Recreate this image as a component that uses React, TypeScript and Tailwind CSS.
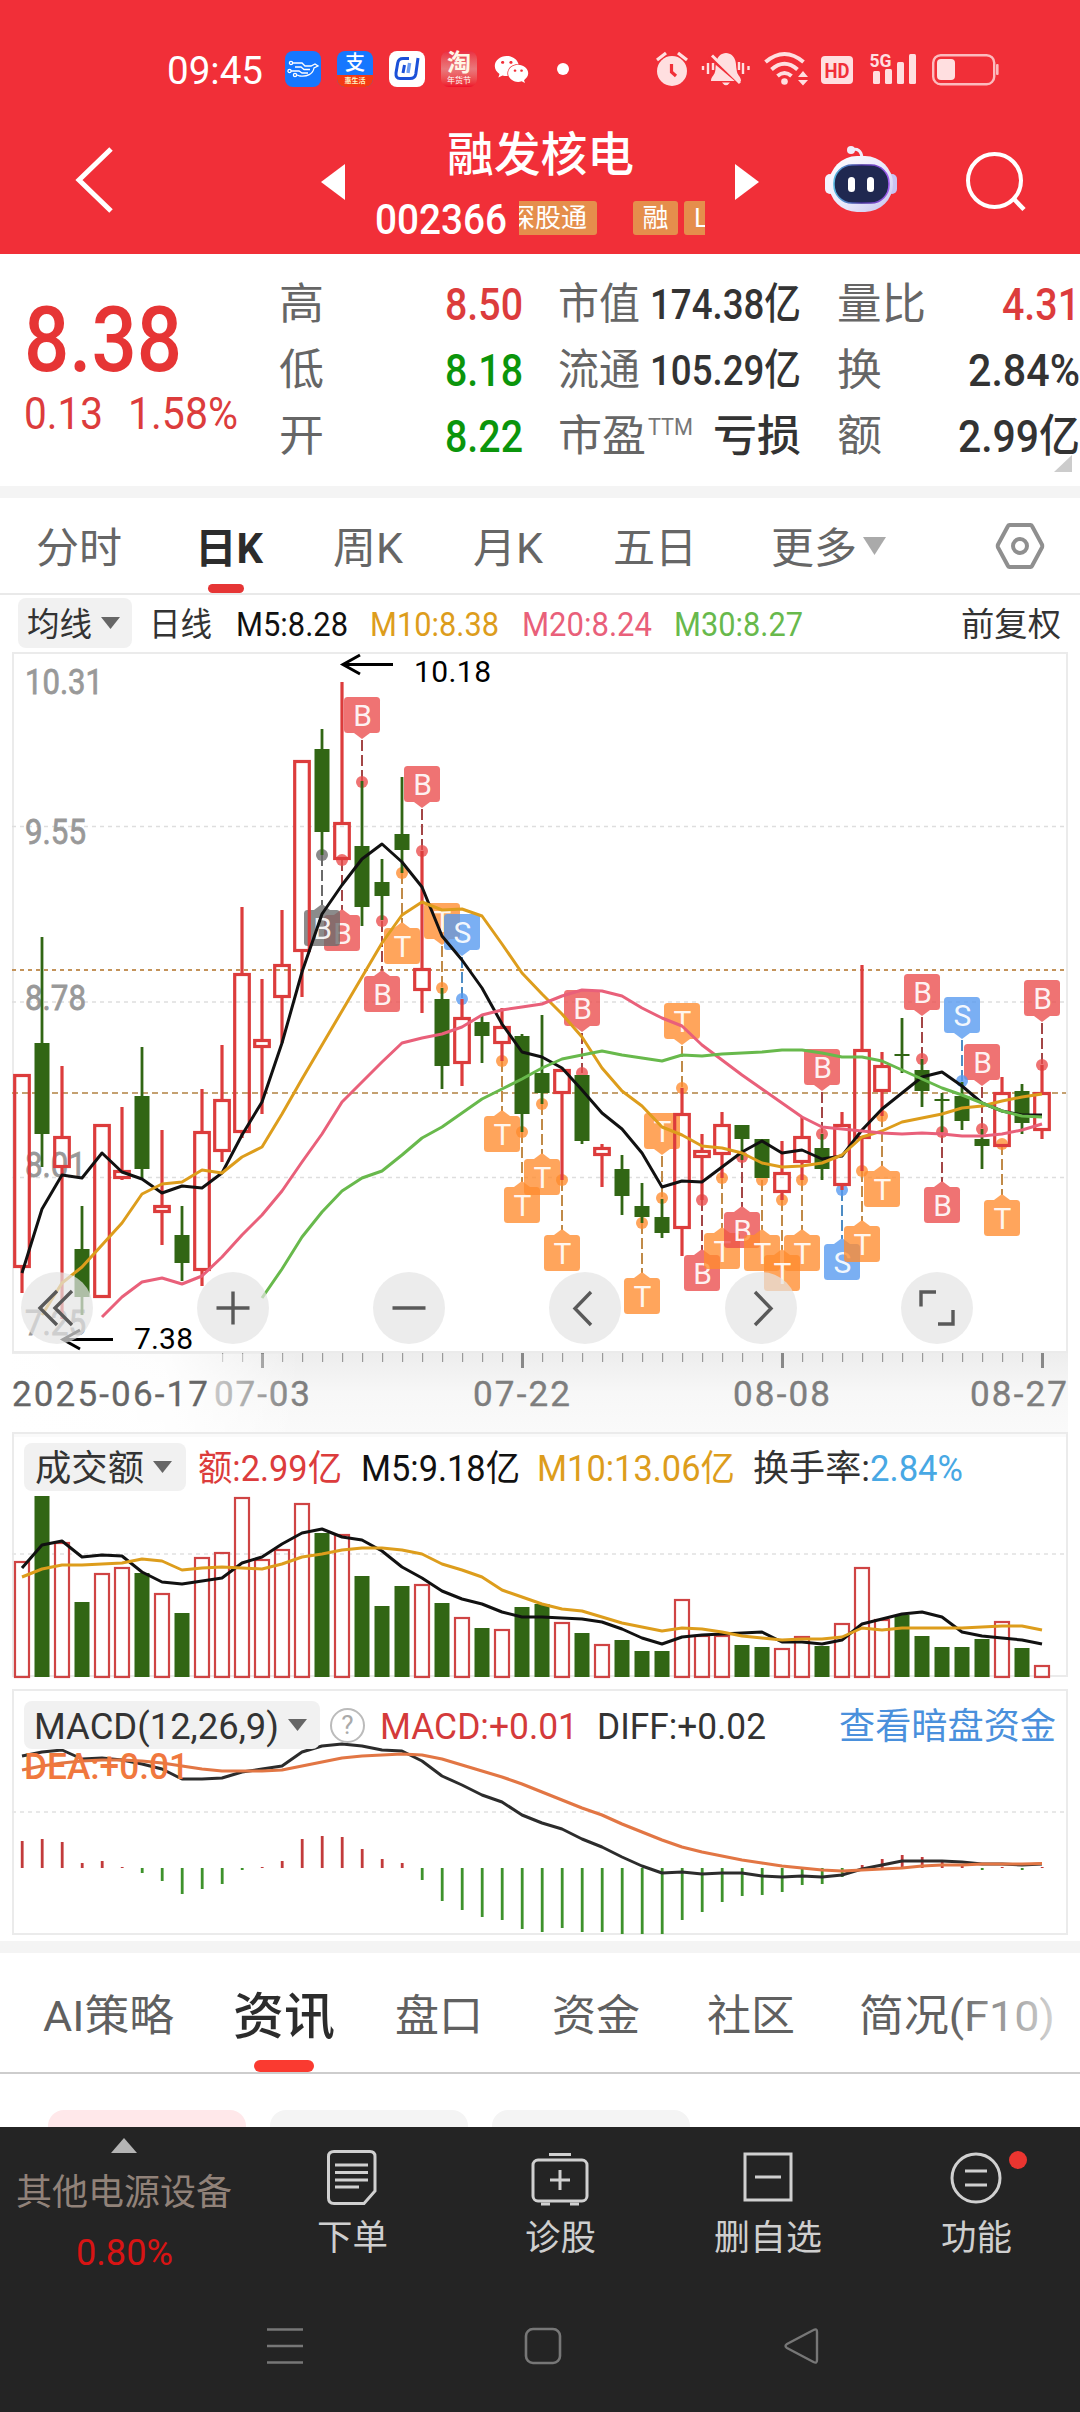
import { useLayoutEffect, useRef, useState } from "react";
import type { ReactNode } from "react";
import { FaWeixin } from "react-icons/fa";

/** Text squeezed or stretched horizontally so that it fills the width of its box. */
function Fit({ className, children }: { className: string; children: ReactNode }) {
  const outer = useRef<HTMLSpanElement>(null);
  const inner = useRef<HTMLSpanElement>(null);
  const [scale, setScale] = useState(1);
  useLayoutEffect(() => {
    if (outer.current && inner.current && inner.current.offsetWidth > 0) {
      setScale(outer.current.clientWidth / inner.current.getBoundingClientRect().width * scale);
    }
  }, []);
  return (
    <span ref={outer} className={"block shrink-0 translate-y-[1.5px] leading-none " + className}>
      <span ref={inner} className="inline-block origin-left whitespace-nowrap leading-none" style={{ transform: `scaleX(${scale})` }}>
        {children}
      </span>
    </span>
  );
}

const RED = "#dc3c3c";
const GREEN = "#316614";
const xOf = (i: number) => 22 + i * 20;

// [rising, bodyTop, bodyBottom, high, low]
const candles: [number, number, number, number, number][] = [
  [1, 1074, 1268, 1074, 1293], [0, 1043, 1134, 937, 1167], [1, 1136, 1168, 1066, 1319], [0, 1249, 1297, 1206, 1315],
  [1, 1124, 1298, 1124, 1298], [1, 1170, 1179, 1107, 1180], [0, 1096, 1169, 1047, 1178], [1, 1205, 1213, 1130, 1245],
  [0, 1235, 1263, 1206, 1281], [1, 1131, 1271, 1089, 1286], [1, 1099, 1152, 1045, 1162], [1, 973, 1133, 907, 1138],
  [1, 1039, 1048, 979, 1114], [1, 964, 998, 910, 1043], [1, 760, 952, 760, 997], [0, 749, 832, 729, 855],
  [1, 822, 860, 682, 860], [0, 846, 907, 781, 926], [0, 882, 896, 859, 920], [0, 834, 850, 777, 873],
  [1, 968, 991, 851, 1013], [0, 999, 1066, 988, 1089], [1, 1017, 1064, 999, 1086], [0, 1022, 1036, 1015, 1063],
  [1, 1026, 1044, 1008, 1061], [0, 1036, 1114, 1034, 1132], [0, 1073, 1093, 1015, 1104], [1, 1069, 1094, 1069, 1180],
  [0, 1075, 1141, 1075, 1144], [1, 1147, 1156, 1144, 1187], [0, 1169, 1196, 1155, 1215], [0, 1206, 1217, 1183, 1223],
  [0, 1217, 1233, 1199, 1238], [1, 1113, 1229, 1088, 1256], [1, 1150, 1158, 1134, 1200], [1, 1124, 1155, 1112, 1178],
  [0, 1125, 1139, 1125, 1160], [0, 1139, 1178, 1139, 1178], [1, 1172, 1193, 1141, 1200], [1, 1136, 1163, 1117, 1180],
  [0, 1148, 1169, 1134, 1180], [1, 1124, 1186, 1112, 1190], [1, 1049, 1139, 965, 1171], [1, 1065, 1092, 1052, 1116],
  [0, 1054, 1056, 1018, 1073], [0, 1070, 1091, 1059, 1107], [0, 1099, 1101, 1093, 1132], [0, 1096, 1121, 1082, 1130],
  [0, 1139, 1146, 1129, 1169], [1, 1092, 1147, 1077, 1147], [0, 1091, 1123, 1084, 1134], [1, 1092, 1131, 1065, 1139],
];

const ma5 = [1273, 1209, 1175, 1178, 1153, 1172, 1179, 1193, 1186, 1188, 1173, 1135, 1102, 1043, 972, 914, 885, 859, 844, 862, 887, 936, 960, 988, 1024, 1052, 1057, 1068, 1090, 1113, 1129, 1153, 1187, 1181, 1182, 1167, 1152, 1141, 1153, 1150, 1159, 1156, 1130, 1109, 1093, 1077, 1072, 1086, 1103, 1111, 1115, 1115];
const ma10 = [1315, 1283, 1267, 1245, 1223, 1194, 1184, 1182, 1170, 1173, 1157, 1147, 1114, 1079, 1045, 1011, 977, 943, 915, 902, 910, 909, 916, 944, 973, 994, 1014, 1037, 1068, 1091, 1106, 1127, 1135, 1146, 1148, 1153, 1163, 1167, 1166, 1163, 1155, 1137, 1131, 1122, 1118, 1114, 1108, 1106, 1101, 1097, 1094];
const ma20 = [1317, 1297, 1282, 1278, 1284, 1276, 1257, 1235, 1215, 1191, 1162, 1134, 1102, 1082, 1062, 1043, 1038, 1034, 1027, 1015, 1010, 1007, 1004, 996, 990, 991, 996, 1008, 1018, 1026, 1045, 1060, 1075, 1089, 1103, 1117, 1127, 1129, 1131, 1133, 1134, 1133, 1134, 1136, 1136, 1134, 1130, 1124];
const ma30 = [1298, 1269, 1237, 1212, 1191, 1178, 1171, 1155, 1138, 1127, 1113, 1099, 1089, 1079, 1068, 1059, 1055, 1051, 1055, 1058, 1061, 1055, 1056, 1054, 1053, 1052, 1050, 1050, 1053, 1057, 1057, 1061, 1070, 1079, 1088, 1095, 1103, 1111, 1116, 1117];

const volTop = [1561, 1496, 1542, 1602, 1573, 1567, 1573, 1593, 1613, 1557, 1552, 1497, 1559, 1549, 1503, 1533, 1534, 1576, 1606, 1586, 1584, 1603, 1617, 1628, 1629, 1607, 1604, 1622, 1633, 1644, 1640, 1651, 1651, 1599, 1635, 1635, 1645, 1647, 1648, 1636, 1646, 1623, 1567, 1619, 1615, 1636, 1647, 1647, 1639, 1621, 1648, 1665];
const vol5 = [1568, 1545, 1541, 1557, 1555, 1556, 1572, 1582, 1584, 1581, 1578, 1563, 1557, 1544, 1533, 1529, 1537, 1540, 1551, 1567, 1578, 1591, 1599, 1604, 1612, 1617, 1617, 1618, 1619, 1622, 1629, 1638, 1644, 1637, 1635, 1634, 1633, 1632, 1642, 1642, 1644, 1640, 1624, 1619, 1614, 1612, 1617, 1632, 1636, 1638, 1640, 1644];
const vol10 = [1577, 1569, 1565, 1565, 1564, 1563, 1559, 1561, 1570, 1568, 1567, 1568, 1569, 1564, 1557, 1554, 1550, 1548, 1548, 1550, 1554, 1564, 1570, 1577, 1590, 1597, 1604, 1609, 1611, 1617, 1623, 1627, 1631, 1628, 1629, 1632, 1636, 1638, 1640, 1639, 1639, 1637, 1628, 1630, 1628, 1628, 1628, 1628, 1627, 1626, 1626, 1630];

const diff = [1756, 1752, 1750, 1759, 1758, 1760, 1764, 1769, 1779, 1779, 1778, 1772, 1769, 1766, 1752, 1746, 1744, 1746, 1750, 1751, 1761, 1776, 1785, 1795, 1802, 1815, 1823, 1829, 1839, 1847, 1857, 1866, 1873, 1872, 1874, 1873, 1873, 1876, 1877, 1876, 1877, 1875, 1869, 1865, 1861, 1861, 1861, 1862, 1864, 1864, 1865, 1864];
const dea = [1770, 1766, 1763, 1761, 1760, 1760, 1761, 1763, 1766, 1769, 1771, 1771, 1771, 1770, 1766, 1762, 1758, 1756, 1755, 1754, 1755, 1759, 1765, 1771, 1777, 1784, 1792, 1800, 1808, 1815, 1824, 1832, 1840, 1847, 1852, 1856, 1860, 1863, 1866, 1868, 1870, 1871, 1870, 1869, 1868, 1866, 1865, 1865, 1864, 1864, 1864, 1863.5];
const macd = [1841, 1839, 1842, 1863, 1861, 1867, 1873, 1881, 1894, 1889, 1884, 1870, 1867, 1861, 1839, 1836, 1837, 1849, 1859, 1863, 1880, 1901, 1910, 1917, 1920, 1929, 1932, 1928, 1932, 1932, 1934, 1934, 1934, 1920, 1912, 1902, 1896, 1895, 1892, 1885, 1884, 1877, 1865, 1859, 1855, 1857, 1861, 1866, 1870, 1867, 1870, 1867];

// [index, letter, dotY, boxTop]; the box hangs above the dot when boxTop < dotY
const markers: [number, string, number, number][] = [
  [17, "B", 782, 697], [20, "B", 851, 766], [28, "B", 1073, 990], [33, "T", 1088, 1003], [40, "B", 1134, 1049],
  [45, "B", 1059, 974], [48, "B", 1129, 1044], [51, "B", 1065, 980], [47, "S", 1081, 997], [21, "T", 988, 903],
  [22, "S", 999, 914], [32, "T", 1198, 1113], [16, "B", 860, 915], [15, "G", 855, 910], [18, "B", 921, 976],
  [19, "T", 873, 928], [24, "T", 1061, 1116], [25, "T", 1132, 1187], [26, "T", 1104, 1159], [27, "T", 1180, 1235],
  [31, "T", 1223, 1278], [34, "B", 1200, 1255], [35, "T", 1178, 1233], [36, "B", 1157, 1212], [37, "T", 1180, 1235],
  [39, "T", 1180, 1235], [38, "T", 1200, 1255], [41, "S", 1190, 1244], [42, "T", 1171, 1226], [43, "T", 1116, 1171],
  [46, "B", 1132, 1187], [49, "T", 1144, 1200],
];
const markFill: Record<string, string> = { B: "#ea4b4b", T: "#ff8c2e", S: "#5598ef", G: "#6a6a6a" };
const markLine: Record<string, string> = { B: "#a34646", T: "#c08a48", S: "#4d8cc4", G: "#6a6a6a" };

const line = (ys: number[], start = 0) => ys.map((y, k) => `${xOf(k + start)},${y}`).join(" ");

function Curve({ ys, start, color, width = 3 }: { ys: number[]; start?: number; color: string; width?: number }) {
  return <polyline points={line(ys, start)} fill="none" stroke={color} strokeWidth={width} strokeLinejoin="round" />;
}

function Marker({ m }: { m: [number, string, number, number] }) {
  const [i, kind, dot, top] = m;
  const x = xOf(i);
  const above = top < dot;
  const b = top + 36;
  return (
    <g>
      <line x1={x} x2={x} y1={above ? b + 7 : dot} y2={above ? dot : top - 5} stroke={markLine[kind]} strokeWidth="2" strokeDasharray="11 4" />
      <circle cx={x} cy={dot} r="6" fill={markFill[kind]} fillOpacity="0.78" />
      <g fill={markFill[kind]} fillOpacity="0.78">
        <rect x={x - 18} y={top} width="36" height="36" rx="3.5" />
        <path d={above ? `M${x - 8} ${b}h16l-8 6z` : `M${x - 8} ${top}h16l-8 -6z`} />
      </g>
      <text x={x + 0.5} y={top + 29} textAnchor="middle" fontSize="30" fill="#fff" fillOpacity="0.93">
        {kind === "G" ? "B" : kind}
      </text>
    </g>
  );
}

function PriceChart() {
  const ticks = Array.from({ length: 42 }, (_, k) => k + 10);
  const prices: [string, number, number][] = [["10.31", 694, 78], ["9.55", 844, 61], ["8.78", 1010, 61], ["8.01", 1177, 61], ["7.25", 1335, 61]];
  return (
    <svg className="block h-[782px] w-[1080px] font-[Roboto]" viewBox="0 650 1080 782">
      <defs>
        <linearGradient id="axisV" x1="0" x2="0" y1="0" y2="1">
          <stop offset="0" stopColor="#ededed" />
          <stop offset="0.5" stopColor="#f7f7f7" />
          <stop offset="1" stopColor="#fafafa" />
        </linearGradient>
        <linearGradient id="axisFade" x1="0" x2="1" y1="0" y2="0">
          <stop offset="0" stopColor="#fff" />
          <stop offset="0.55" stopColor="#fff" stopOpacity="0.9" />
          <stop offset="1" stopColor="#fff" stopOpacity="0" />
        </linearGradient>
      </defs>
      <rect x="12" y="1353" width="1056" height="79" fill="url(#axisV)" />
      <rect x="13" y="653" width="1054" height="699" fill="#fff" stroke="#ebebeb" strokeWidth="2" />
      <g stroke="#dedede" strokeWidth="1.3" strokeDasharray="4 4">
        <path d="M12 826.5H1066M12 1002H1066M12 1177.5H1066" />
      </g>
      <path d="M12 970H1066" stroke="#c4935a" strokeWidth="2" strokeDasharray="4 4" />
      <path d="M12 1093H1066" stroke="#c4a070" strokeWidth="1.8" strokeDasharray="6 4" />

      {ticks.map((i) =>
        (i - 12) % 13 === 0 ? (
          <rect key={i} x={xOf(i) - 1} y="1353" width="3" height="15" fill="#888" />
        ) : (
          <rect key={i} x={xOf(i)} y="1353" width="1.2" height="9" fill="#999" />
        ),
      )}
      <g fontSize="35" fill="#7e7e7e" stroke="#7e7e7e" strokeWidth="0.4">
        <text x="214" y="1406" textLength="96">07-03</text>
        <text x="473" y="1406" textLength="97">07-22</text>
        <text x="733" y="1406" textLength="97">08-08</text>
        <text x="970" y="1406" textLength="97">08-27</text>
      </g>
      <rect x="0" y="1354" width="300" height="78" fill="url(#axisFade)" />
      <text x="12" y="1406" fontSize="35" fill="#666" stroke="#666" strokeWidth="0.3" textLength="196">2025-06-17</text>

      <g fill="#999" stroke="#999" strokeWidth="0.8" fontSize="35">
        {prices.map(([t, y, w]) => (
          <text key={t} x="25" y={y} textLength={w} lengthAdjust="spacingAndGlyphs">{t}</text>
        ))}
      </g>

      {markers.map((m) => <Marker key={m[0]} m={m} />)}

      {candles.map(([up, t, b, h, l], i) => {
        const x = xOf(i);
        return up ? (
          <g key={i} stroke={RED} strokeWidth="3.2" fill="none">
            {h < t && <path d={`M${x} ${h}V${t}`} />}
            {l > b && <path d={`M${x} ${b}V${l}`} />}
            <rect x={x - 7.3} y={t + 1.5} width="14.6" height={Math.max(b - t - 3, 2)} />
          </g>
        ) : (
          <g key={i} fill={GREEN}>
            <rect x={x - 1.4} y={h} width="2.8" height={l - h} />
            <rect x={x - 7.5} y={t} width="15" height={b - t} />
          </g>
        );
      })}

      <Curve ys={ma5} color="#111" />
      <Curve ys={ma10} start={1} color="#dd9d1c" />
      <Curve ys={ma20} start={4} color="#e9607a" />
      <Curve ys={ma30} start={12} color="#68b94c" />

      <g stroke="#000" strokeWidth="3" fill="none">
        <path d="M393 664.5H343M360 655L343 664.5L360 674" />
        <path d="M113 1339.5H63M80 1330L63 1339.5L80 1349" />
      </g>
      <g fontSize="30">
        <text x="414" y="682" textLength="77">10.18</text>
        <text x="134" y="1349" textLength="59">7.38</text>
      </g>
    </svg>
  );
}

function Control({ d }: { d: string }) {
  return (
    <button className="flex size-[72px] items-center justify-center rounded-full bg-[#e4e4e4]/70">
      <svg className="size-[72px]" viewBox="0 0 72 72" fill="none" stroke="#595959" strokeWidth="3.4"><path d={d} /></svg>
    </button>
  );
}

function VolumeChart() {
  return (
    <svg className="block h-[256px] w-[1080px]" viewBox="0 1432 1080 256">
      <path d="M12 1432H1068V1437H12z" fill="#fafafa" />
      <rect x="13" y="1433" width="1054" height="243" fill="none" stroke="#ebebeb" strokeWidth="2" />
      <path d="M12 1554H1066" stroke="#e8e8e8" strokeWidth="2" strokeDasharray="4 4" />
      {volTop.map((t, i) =>
        candles[i][0] ? (
          <rect key={i} x={xOf(i) - 7} y={t + 1} width="14" height={1676 - t} fill="none" stroke="#cf4444" strokeWidth="2.2" />
        ) : (
          <rect key={i} x={xOf(i) - 7.5} y={t} width="15" height={1677 - t} fill={GREEN} />
        ),
      )}
      <Curve ys={vol5} color="#111" />
      <Curve ys={vol10} color="#dd9d1c" />
    </svg>
  );
}

function MacdChart() {
  return (
    <svg className="block h-[253px] w-[1080px]" viewBox="0 1688 1080 253">
      <rect x="13" y="1690" width="1054" height="244" fill="none" stroke="#ebebeb" strokeWidth="2" />
      <path d="M12 1812H1066" stroke="#e8e8e8" strokeWidth="2" strokeDasharray="4 4" />
      {macd.map((y, i) => (
        <rect key={i} x={xOf(i) - 1.2} y={Math.min(y, 1868)} width="2.8" height={Math.abs(y - 1868)} fill={y < 1868 ? "#c23b3b" : "#3e922c"} />
      ))}
      <Curve ys={diff} color="#2c2c2c" width={3} />
      <Curve ys={dea} color="#e27644" width={3.2} />
    </svg>
  );
}

function Down({ className }: { className: string }) {
  return <svg className={"shrink-0 " + className} viewBox="0 0 20 13" preserveAspectRatio="none"><path d="M0 0H20L10 13z" fill="currentColor" /></svg>;
}

function StatusBar() {
  return (
    <div className="flex h-[54px] items-center pl-[167px]">
      <Fit className="w-[96px] text-[38px]">09:45</Fit>
      <svg className="ml-[22px] size-9" viewBox="0 0 36 36">
        <rect width="36" height="36" rx="8" fill="#1677ff" />
        <g fill="none" stroke="#fff" strokeWidth="1.3">
          <circle cx="6" cy="12" r="1.6" /><circle cx="4.5" cy="20" r="1.6" /><circle cx="10" cy="24" r="1.6" />
          <path d="M8 12H17L20 15H26L30 13L33 15L29 17C28 23 22 26 15 25L12 24M6 20H14L17 22H23M10 16H16L19 18.5H25" />
        </g>
      </svg>
      <div className="ml-4 flex size-9 flex-col rounded-lg bg-[#1677ff] text-center">
        <span className="block h-6 text-[20px] font-medium leading-[24px]">支</span>
        <span className="block h-3 rounded-b-lg bg-[#f43a14] text-[7px] font-bold leading-[12px] text-[#fff0c0]">惠生活</span>
      </div>
      <svg className="ml-4 size-9" viewBox="0 0 36 36">
        <rect width="36" height="36" rx="8" fill="#fff" />
        <path d="M20 7.5H14Q9.500 7.500 8.700 12L7 22Q6.500 27.500 11 27.500H21Q26 27.500 26.800 23L29 7M14 22L15.500 14" fill="none" stroke="#1b50d8" strokeWidth="3" />
        <path d="M19 22L20.600 12" stroke="#6b9bf2" strokeWidth="3.4" />
      </svg>
      <div className="ml-4 flex size-9 flex-col items-center rounded-lg bg-gradient-to-b from-[#ea2c42] via-[#e9787c] to-[#ee0a2a]">
        <span className="text-[24px] font-bold leading-[25px] text-[#fff6e6]">淘</span>
        <span className="text-[8px] leading-[10px]">年货节</span>
      </div>
      <FaWeixin className="ml-[17px] size-[35px]" />
      <span className="ml-[28px] size-3 rounded-full bg-white" />

      <svg className="ml-[87px] h-[36px] w-[345px] overflow-visible text-[#ffdfe0]" viewBox="657 51 345 36" fill="currentColor">
        <circle cx="673" cy="71" r="15" />
        <path d="M658 60L667 53M688 60L679 53" stroke="currentColor" strokeWidth="3.2" />
        <path d="M672.500 64V72L677 76" fill="none" stroke="#f12f38" strokeWidth="3.2" />
        <path d="M727 53C717 54 717 63 716.500 69C716 76 712 76 712 81H742C742 76 738 76 737.500 69C737 63 737 54 727 53zM723 82.500H731Q727 88 723 82.500z" />
        <path d="M710 57L744 86" stroke="#f12f38" strokeWidth="3" />
        <path d="M713 55.500L741 83" stroke="currentColor" strokeWidth="3" />
        <path d="M704 66V70M709 63V74M714 63V70M740 62V70M744 63V74M749.500 66V70" stroke="currentColor" strokeWidth="2.4" />
        <g fill="none" stroke="currentColor" strokeWidth="4">
          <path d="M766.500 62Q785.500 46 804.500 62M772.500 69.500Q785.500 58 798.500 69.500M778.500 76Q785.500 70 792.500 76" />
        </g>
        <circle cx="785.500" cy="81.500" r="3.300" />
        <path d="M799 77H809L804 71zM799 80H809L804 85.500z" />
        <rect x="822" y="56" width="32" height="28" rx="4" />
        <text x="838" y="77.500" textAnchor="middle" fontSize="21" fontWeight="700" fill="#f12f38" textLength="25" lengthAdjust="spacingAndGlyphs" className="font-[Roboto]">HD</text>
        <text x="870.500" y="66.500" fontSize="19" fontWeight="700" textLength="22" lengthAdjust="spacingAndGlyphs" className="font-[Roboto]">5G</text>
        <rect x="874" y="71" width="7" height="13" rx="1.500" /><rect x="886" y="69" width="7" height="15" rx="1.500" />
        <rect x="898" y="62" width="7" height="22" rx="1.500" /><rect x="910" y="54" width="7" height="30" rx="1.500" />
        <rect x="934.200" y="55.200" width="61" height="29" rx="7.500" fill="none" stroke="currentColor" strokeWidth="2.400" opacity="0.8" />
        <rect x="938" y="59" width="18" height="21" rx="4" />
        <rect x="997" y="64" width="2.600" height="11" rx="1" opacity="0.8" />
      </svg>
    </div>
  );
}

function TitleBar() {
  return (
    <div className="flex h-[138px] items-center">
      <svg className="-mt-[10px] ml-[74px] h-[66px] w-[42px]" viewBox="0 0 42 66" fill="none" stroke="#fff" strokeWidth="5"><path d="M37 2L5 33L37 64" /></svg>
      <svg className="-mt-[6px] ml-[205px] h-[36px] w-[24px]" viewBox="0 0 24 36" fill="#fff"><path d="M24 0V36L0 18z" /></svg>
      <div className="ml-[30px] flex h-[138px] w-[330px] flex-col items-center">
        <Fit className="mt-[13px] w-[187px] text-[47px] font-medium">融发核电</Fit>
        <div className="mt-[21px] flex w-[330px] items-center">
          <Fit className="w-[132px] text-[42px] font-medium">002366</Fit>
          <div className="ml-3 flex h-[34px] w-[186px] overflow-hidden text-[26px] leading-[34px]">
            <div className="-ml-[10px] flex shrink-0">
              <span className="rounded-[3px] bg-[#e58e4c] pr-[10px]">深股通</span>
              <span className="ml-9 w-[45px] rounded-[3px] bg-[#e58e4c] text-center">融</span>
              <span className="ml-[6px] w-[45px] rounded-[3px] bg-[#e58e4c] pl-[10px]">L</span>
            </div>
          </div>
        </div>
      </div>
      <svg className="-mt-[6px] ml-[30px] h-[36px] w-[24px]" viewBox="0 0 24 36" fill="#fff"><path d="M0 0V36L24 18z" /></svg>
      <svg className="-mt-[12px] ml-[65px] h-[68px] w-[74px]" viewBox="824 145 74 68">
        <defs>
          <linearGradient id="head" x1="0" x2="1" y1="0" y2="1"><stop offset="0" stopColor="#fff" /><stop offset="0.6" stopColor="#e6e6fa" /><stop offset="1" stopColor="#c3c0ee" /></linearGradient>
          <linearGradient id="visor" x1="0" x2="1"><stop offset="0" stopColor="#58b8e0" /><stop offset="0.5" stopColor="#44309a" /><stop offset="1" stopColor="#a05cf0" /></linearGradient>
        </defs>
        <path d="M851 150Q861 147 862 158" fill="none" stroke="#f1ecfa" strokeWidth="3" />
        <circle cx="851" cy="150" r="4" fill="#f1ecfa" />
        <rect x="825" y="174" width="10" height="20" rx="5" fill="#f4f2ff" />
        <rect x="887" y="174" width="10" height="20" rx="5" fill="#c9c4f2" />
        <rect x="829" y="156" width="64" height="56" rx="28" fill="url(#head)" />
        <rect x="834" y="165" width="55" height="38" rx="18" fill="#1f2850" stroke="url(#visor)" strokeWidth="1.600" />
        <rect x="848" y="177" width="7" height="15" rx="3.500" fill="#fff" /><rect x="867" y="177" width="7" height="15" rx="3.500" fill="#fff" />
      </svg>
      <svg className="-mt-[6px] ml-[67px] size-[62px]" viewBox="0 0 62 62" fill="none" stroke="#fff" strokeWidth="4"><circle cx="29.500" cy="29.500" r="26.500" /><path d="M48 47L59 58.500" strokeWidth="4.500" /></svg>
    </div>
  );
}

function Quote() {
  return (
    <section className="relative flex h-[232px] text-[#333]">
      <div className="w-[279px] pl-[24px] text-[#e63535]">
        <Fit className="mt-[40px] w-[158px] text-[90px] font-medium">8.38</Fit>
        <div className="mt-[5px] flex">
          <Fit className="w-[79px] text-[45px] text-[#dc3c3c]">0.13</Fit>
          <Fit className="ml-[25px] w-[110px] text-[45px] text-[#dc3c3c]">1.58%</Fit>
        </div>
      </div>
      <div className="mt-[16px] grid h-[197px] w-[244px] grid-cols-[1fr_78px] grid-rows-3 items-center text-[43px]">
        <Fit className="w-[45px] text-[#666]">高</Fit><Fit className="w-[78px] text-[45px] font-medium text-[#dc3c3c]">8.50</Fit>
        <Fit className="w-[45px] text-[#666]">低</Fit><Fit className="w-[78px] text-[45px] font-medium text-[#0b950b]">8.18</Fit>
        <Fit className="w-[45px] text-[#666]">开</Fit><Fit className="w-[78px] text-[45px] font-medium text-[#0b950b]">8.22</Fit>
      </div>
      <div className="ml-[35px] mt-[16px] grid h-[197px] w-[243px] grid-rows-3 items-center text-[43px]">
        <div className="flex items-center justify-between"><Fit className="w-[82px] text-[#666]">市值</Fit><Fit className="w-[151px] font-medium">174.38亿</Fit></div>
        <div className="flex items-center justify-between"><Fit className="w-[82px] text-[#666]">流通</Fit><Fit className="w-[151px] font-medium">105.29亿</Fit></div>
        <div className="flex items-center">
          <Fit className="w-[88px] text-[#666]">市盈</Fit>
          <Fit className="mb-[18px] ml-[2px] w-[45px] text-[23px] text-[#777]">TTM</Fit>
          <Fit className="ml-auto w-[88px] font-medium">亏损</Fit>
        </div>
      </div>
      <div className="ml-[36px] mt-[16px] grid h-[197px] w-[243px] grid-rows-3 items-center text-[43px]">
        <div className="flex items-center justify-between"><Fit className="w-[89px] text-[#666]">量比</Fit><Fit className="w-[78px] text-[45px] font-medium text-[#dc3c3c]">4.31</Fit></div>
        <div className="flex items-center justify-between"><Fit className="w-[45px] text-[#666]">换</Fit><Fit className="w-[112px] text-[45px] font-medium">2.84%</Fit></div>
        <div className="flex items-center justify-between"><Fit className="w-[45px] text-[#666]">额</Fit><Fit className="w-[122px] text-[45px] font-medium">2.99亿</Fit></div>
      </div>
      <svg className="absolute bottom-[14px] right-2 h-[17px] w-[18px]" viewBox="0 0 18 17"><path d="M18 0V17H0z" fill="#ccc" /></svg>
    </section>
  );
}

function PeriodTabs() {
  return (
    <nav className="flex h-[97px] items-center border-b-2 border-[#e9e9e9] text-[42px] text-[#666]">
      <Fit className="ml-[36px] mt-[2px] w-[86px]">分时</Fit>
      <div className="relative ml-[73px] flex h-[95px] items-center text-[#2c2c2c]">
        <Fit className="mt-[2px] w-[68px] font-bold">日K</Fit>
        <span className="absolute bottom-0 left-[13px] h-[9px] w-[36px] rounded-full bg-[#e63535]" />
      </div>
      <Fit className="ml-[70px] mt-[2px] w-[70px]">周K</Fit>
      <Fit className="ml-[70px] mt-[2px] w-[70px]">月K</Fit>
      <Fit className="ml-[70px] mt-[2px] w-[84px]">五日</Fit>
      <Fit className="ml-[74px] mt-[2px] w-[86px]">更多</Fit>
      <Down className="ml-[6px] h-[18px] w-[23px] text-[#aaa]" />
      <svg className="ml-[109px] h-[48px] w-[50px]" viewBox="0 0 50 48" fill="none" stroke="#8f8f8f" strokeWidth="4"><path d="M14.500 3H35.500Q36.500 3 37 4L47 22.500Q47.500 24 47 25.500L37 44Q36.500 45 35.500 45H14.500Q13.500 45 13 44L3 25.500Q2.500 24 3 22.500L13 4Q13.500 3 14.500 3z" /><circle cx="25" cy="24" r="7" /></svg>
    </nav>
  );
}

function AverageRow() {
  return (
    <div className="flex h-[55px] items-center text-[33px] text-[#333]">
      <div className="ml-[18px] flex h-[50px] w-[114px] items-center rounded-lg bg-[#f1f1f1] pl-[9px]">
        <Fit className="w-[65px]">均线</Fit>
        <Down className="ml-[9px] h-[12px] w-[19px] text-[#666]" />
      </div>
      <Fit className="ml-[17px] w-[63px]">日线</Fit>
      <Fit className="ml-[24px] w-[112px] text-[#111]">M5:8.28</Fit>
      <Fit className="ml-[22px] w-[129px] text-[#dd9d1c]">M10:8.38</Fit>
      <Fit className="ml-[23px] w-[130px] text-[#e9607a]">M20:8.24</Fit>
      <Fit className="ml-[22px] w-[129px] text-[#68b94c]">M30:8.27</Fit>
      <Fit className="ml-[158px] w-[100px]">前复权</Fit>
    </div>
  );
}

function DetailTabs() {
  return (
    <>
      <nav className="relative flex h-[121px] items-center border-b-2 border-[#cdcdcd] text-[43px] text-[#606060]">
        <Fit className="ml-[43px] mt-[3px] w-[131px]">AI策略</Fit>
        <div className="relative ml-[59px] flex h-[119px] items-center text-[#2c2c2c]">
          <Fit className="mt-[4px] w-[102px] text-[50px] font-medium">资讯</Fit>
          <span className="absolute bottom-0 left-[21px] h-[12px] w-[60px] rounded-full bg-[#fa3a30]" />
        </div>
        <Fit className="ml-[60px] mt-[3px] w-[88px]">盘口</Fit>
        <Fit className="ml-[69px] mt-[3px] w-[88px]">资金</Fit>
        <Fit className="ml-[67px] mt-[3px] w-[88px]">社区</Fit>
        <Fit className="ml-[64px] mt-[3px] w-[196px]">简况(F10)</Fit>
        <span className="absolute right-0 top-0 h-[119px] w-[130px] bg-gradient-to-r from-white/0 to-white/90" />
      </nav>
      <div className="flex h-[53px] gap-6 overflow-hidden pl-12 pt-[36px]">
        <span className="h-[72px] w-[198px] rounded-2xl bg-[#ffe8ea]" />
        <span className="h-[72px] w-[198px] rounded-2xl bg-[#f4f4f4]" />
        <span className="h-[72px] w-[198px] rounded-2xl bg-[#f4f4f4]" />
      </div>
    </>
  );
}

function Action({ box, label, width, children }: { box: string; label: string; width: string; children: ReactNode }) {
  return (
    <div className={"flex flex-col items-center pt-[20px] " + box}>
      <svg className="h-[60px] w-[60px]" viewBox="0 0 60 60" fill="none" stroke="#d0d0d0" strokeWidth="3">{children}</svg>
      <Fit className={"mt-[12px] text-[35px] text-[#cfcfcf] " + width}>{label}</Fit>
    </div>
  );
}

function BottomBar() {
  return (
    <footer className="h-[285px] bg-[#242424]">
      <div className="flex h-[170px]">
        <div className="flex w-[248px] flex-col items-center pt-[11px]">
          <svg className="h-[15px] w-[26px]" viewBox="0 0 26 15"><path d="M13 0L26 15H0z" fill="#b4b4b4" /></svg>
          <Fit className="mt-[20px] w-[216px] text-[36px] text-[#918279]">其他电源设备</Fit>
          <Fit className="mt-[23px] w-[97px] text-[37px] text-[#d81414]">0.80%</Fit>
        </div>
        <Action box="w-[208px]" label="下单" width="w-[71px]">
          <path d="M12 4.500H48Q53 4.500 53 9.500V44L42 56.500H12Q6.500 56.500 6.500 51V9.500Q6.500 4.500 12 4.500z" />
          <path d="M13 18H46M13 25.500H46M13 33H46M13 40H37" />
        </Action>
        <Action box="w-[208px]" label="诊股" width="w-[71px]">
          <rect x="3" y="13" width="54" height="41" rx="5" />
          <path d="M19 7.500H41M30 23V43M20 33H40M11 57H20M40 57H49" />
        </Action>
        <Action box="w-[208px]" label="删自选" width="w-[108px]">
          <rect x="7" y="7" width="46" height="46" />
          <path d="M17 30H43" />
        </Action>
        <div className="relative">
          <Action box="w-[208px]" label="功能" width="w-[71px]">
            <circle cx="30" cy="31" r="24" />
            <path d="M19 24H41M19 38H41" />
          </Action>
          <span className="absolute left-[137px] top-[24px] size-[18px] rounded-full bg-[#ea3530]" />
        </div>
      </div>
      <div className="flex items-center pl-[266px] pt-[30px]">
        <svg className="h-[38px] w-[38px]" viewBox="0 0 38 38" stroke="#777" strokeWidth="2.600"><path d="M1 2.500H37M1 19H37M1 35.500H37" /></svg>
        <svg className="ml-[220px] size-[38px]" viewBox="0 0 38 38" fill="none" stroke="#777" strokeWidth="2.600"><rect x="2" y="2" width="34" height="34" rx="7" /></svg>
        <svg className="ml-[220px] size-[38px]" viewBox="0 0 38 38" fill="none" stroke="#777" strokeWidth="2.400"><path d="M35 5V33Q35 37 31.500 35L5 21Q2 19 5 17L31.500 3Q35 1 35 5z" /></svg>
      </div>
    </footer>
  );
}

export default function App() {
  return (
    <main className="flex h-[2412px] w-[1080px] flex-col overflow-hidden bg-white font-[Roboto,'Noto_Sans_CJK_SC',sans-serif] text-black">
      <header className="h-[254px] bg-[#f12f38] pt-[42px] text-white">
        <StatusBar />
        <div className="mt-[20px]"><TitleBar /></div>
      </header>
      <Quote />
      <div className="h-3 bg-[#f4f4f4]" />
      <PeriodTabs />
      <AverageRow />

      <section className="relative">
        <PriceChart />
        <div className="absolute left-[21px] top-[622px] flex gap-[104px]">
          <Control d="M36 19L19 36L36 53M51 19L34 36L51 53" />
          <Control d="M19.500 36H52.500M36 19.500V52.500" />
          <Control d="M19.500 36H52.500" />
          <Control d="M42 20L26 36.500L42 53" />
          <Control d="M30 20L46 36.500L30 53" />
          <Control d="M20 34.500V20H35M52 38V52H37" />
        </div>
      </section>

      <section className="relative">
        <VolumeChart />
        <div className="absolute left-[24px] top-[11px] flex h-[48px] items-center text-[36px] text-[#333]">
          <div className="flex h-[48px] w-[162px] items-center rounded-lg bg-[#f1f1f1] pl-[11px]">
            <Fit className="w-[109px]">成交额</Fit>
            <Down className="ml-[9px] h-[12px] w-[19px] text-[#666]" />
          </div>
          <Fit className="ml-[12px] w-[144px] text-[#dc3c3c]">额:2.99亿</Fit>
          <Fit className="ml-[19px] w-[159px] text-[#111]">M5:9.18亿</Fit>
          <Fit className="ml-[17px] w-[198px] text-[#dd9d1c]">M10:13.06亿</Fit>
          <Fit className="ml-[18px] w-[117px]">换手率:</Fit>
          <Fit className="w-[93px] text-[#48a8e4]">2.84%</Fit>
        </div>
      </section>

      <section className="relative">
        <MacdChart />
        <div className="absolute left-[24px] top-[13px] flex h-[48px] items-center text-[36px] text-[#333]">
          <div className="flex h-[48px] w-[296px] items-center rounded-lg bg-[#f1f1f1] pl-[10px]">
            <Fit className="w-[245px]">MACD(12,26,9)</Fit>
            <Down className="ml-[9px] h-[12px] w-[19px] text-[#666]" />
          </div>
          <div className="ml-[10px] flex size-[35px] items-center justify-center rounded-full border-2 border-[#bbb] text-[26px] leading-none text-[#aaa]">?</div>
          <Fit className="ml-[15px] w-[198px] text-[#d43a3a]">MACD:+0.01</Fit>
          <Fit className="ml-[19px] w-[169px]">DIFF:+0.02</Fit>
          <Fit className="ml-[73px] w-[217px] text-[#4a90dc]">查看暗盘资金</Fit>
        </div>
        <div className="absolute left-[24px] top-[59px]"><Fit className="w-[165px] text-[36px] font-medium text-[#f0783e]">DEA:+0.01</Fit></div>
      </section>

      <div className="h-3 bg-[#f4f4f4]" />
      <DetailTabs />
      <BottomBar />
    </main>
  );
}
